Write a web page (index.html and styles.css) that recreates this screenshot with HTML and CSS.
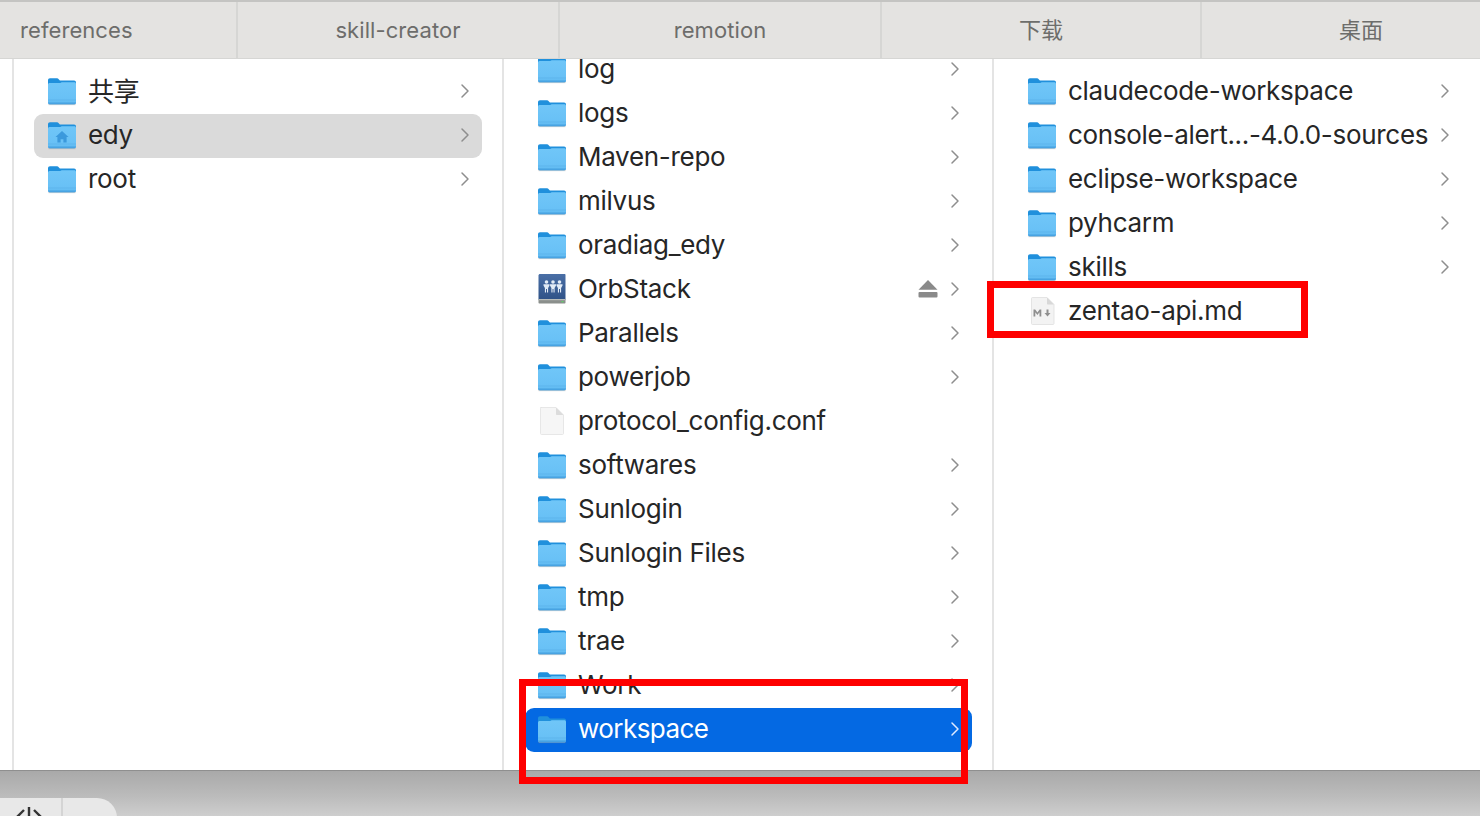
FILE: index.html
```html
<!DOCTYPE html>
<html lang="zh">
<head>
<meta charset="utf-8">
<title>Finder</title>
<link rel="stylesheet" href="styles.css">
</head>
<body>
<svg class="defs" width="0" height="0" aria-hidden="true">
  <defs>
    <linearGradient id="fb" x1="0" y1="0" x2="0" y2="1"><stop offset="0" stop-color="#70c6f8"/><stop offset="1" stop-color="#66bff5"/></linearGradient>
    <linearGradient id="ob" x1="0" y1="0" x2="0" y2="1"><stop offset="0" stop-color="#4a6fa6"/><stop offset="1" stop-color="#2f5287"/></linearGradient>
    <symbol id="folder" viewBox="0 0 30 30">
      <path d="M1.500 28.500h27" stroke="#9a9a9a" stroke-opacity=".5" stroke-width="1.200"/>
      <path d="M1 6.500V4.200C1 3 1.800 2.200 3 2.200h6.600c1 0 1.500.4 2.100 1l1.200 1.200h14.200c1.200 0 1.900.8 1.900 2v3H1z" fill="#2090dc"/>
      <path d="M1 8.700c0-1 .7-1.600 1.700-1.600h10.600l1.400-.9h12.600c1 0 1.700.7 1.700 1.700v18.500c0 1.100-.7 1.900-1.900 1.900H2.900C1.700 28.300 1 27.500 1 26.400z" fill="url(#fb)"/>
      <path d="M1 23.500h28v1.100H1zM1 25.800h28v.8H1z" fill="#4fa9e6" opacity=".5"/>
      <path d="M1 26.600h28c0 1-.7 1.700-1.900 1.700H2.900C1.700 28.300 1 27.600 1 26.600z" fill="#48a3e2"/>
    </symbol>
    <symbol id="chev" viewBox="0 0 10 16">
      <path d="M2 2l6 6-6 6" fill="none" stroke="currentColor" stroke-width="1.500" stroke-linecap="round" stroke-linejoin="round"/>
    </symbol>
  </defs>
</svg>

<div class="window">
  <header class="tabs">
    <div class="tab tab-first">references</div>
    <div class="tab tab-b">skill-creator</div>
    <div class="tab tab-c">remotion</div>
    <div class="tab tab-d tab-cjk">下载</div>
    <div class="tab tab-e tab-cjk">桌面</div>
  </header>

  <main class="browser">
    <div class="gutter"></div>

    <section class="col col-1">
      <ul class="list list-1">
        <li class="row"><svg class="ico"><use href="#folder"/></svg><span class="name name-cjk">共享</span><svg class="chev"><use href="#chev"/></svg></li>
        <li class="row row-muted">
          <svg class="ico" viewBox="0 0 30 30"><use href="#folder" width="30" height="30"/><path d="M15 11l-6.500 6h1.900v5.500h3.200v-3.300h2.800v3.300h3.200V17h1.900z" fill="#2f8fd6" opacity=".8"/></svg>
          <span class="name">edy</span><svg class="chev"><use href="#chev"/></svg></li>
        <li class="row"><svg class="ico"><use href="#folder"/></svg><span class="name">root</span><svg class="chev"><use href="#chev"/></svg></li>
      </ul>
    </section>

    <section class="col col-2">
      <ul class="list list-2">
        <li class="row"><svg class="ico"><use href="#folder"/></svg><span class="name">log</span><svg class="chev"><use href="#chev"/></svg></li>
        <li class="row"><svg class="ico"><use href="#folder"/></svg><span class="name">logs</span><svg class="chev"><use href="#chev"/></svg></li>
        <li class="row"><svg class="ico"><use href="#folder"/></svg><span class="name">Maven-repo</span><svg class="chev"><use href="#chev"/></svg></li>
        <li class="row"><svg class="ico"><use href="#folder"/></svg><span class="name">milvus</span><svg class="chev"><use href="#chev"/></svg></li>
        <li class="row"><svg class="ico"><use href="#folder"/></svg><span class="name">oradiag_edy</span><svg class="chev"><use href="#chev"/></svg></li>
        <li class="row">
          <svg class="ico" viewBox="0 0 30 30">
            <path d="M3 0h24.500c.6 0 1 .4 1 1v25H1.500V1.500C1.500 .7 2.200 0 3 0z" fill="url(#ob)"/>
            <path d="M1.500 25.500h27v3.300c0 .4-.3.700-.7.700H2.200c-.4 0-.7-.3-.7-.7z" fill="#8b8f8c"/>
            <path d="M1.500 25h27v1.200h-27z" fill="#b9bdba"/>
            <rect x="24.500" y="27" width="2" height="1.300" fill="#5fd06a"/>
            <g fill="#e3ecf6">
              <circle cx="9.500" cy="8" r="1.800"/><path d="M6.500 10.300h6v1.200l-1.400 2.500v4.500H10v-3.500H9v3.500H7.900V14l-1.400-2.500z"/>
              <circle cx="16" cy="8" r="1.800"/><path d="M13 10.300h6v1.200l-1.400 2.500v4.500h-1.100v-3.500h-1v3.500h-1.100V14L13 11.500z"/>
              <circle cx="22.500" cy="8" r="1.800"/><path d="M19.500 10.300h6v1.200l-1.400 2.500v4.500H23v-3.500h-1v3.500h-1.100V14l-1.400-2.500z"/>
            </g>
          </svg>
          <span class="name">OrbStack</span>
          <svg class="eject" viewBox="0 0 20 18"><path d="M10 0l9.500 9.800H.5z" fill="#8a8a8a"/><rect x=".5" y="12" width="19" height="5.500" rx="1" fill="#8a8a8a"/></svg>
          <svg class="chev"><use href="#chev"/></svg></li>
        <li class="row"><svg class="ico"><use href="#folder"/></svg><span class="name">Parallels</span><svg class="chev"><use href="#chev"/></svg></li>
        <li class="row"><svg class="ico"><use href="#folder"/></svg><span class="name">powerjob</span><svg class="chev"><use href="#chev"/></svg></li>
        <li class="row">
          <svg class="ico" viewBox="0 0 30 30"><path d="M3.500 1.500h15.500l7.500 7.500v18.500c0 .6-.4 1-1 1h-21c-.6 0-1-.4-1-1v-25c0-.6.400-1 1-1z" fill="#f6f6f6" stroke="#e2e2e2" stroke-width=".8"/><path d="M19 1.500V8c0 .6.400 1 1 1h6.500z" fill="#dcdcdc"/></svg>
          <span class="name">protocol_config.conf</span></li>
        <li class="row"><svg class="ico"><use href="#folder"/></svg><span class="name">softwares</span><svg class="chev"><use href="#chev"/></svg></li>
        <li class="row"><svg class="ico"><use href="#folder"/></svg><span class="name">Sunlogin</span><svg class="chev"><use href="#chev"/></svg></li>
        <li class="row"><svg class="ico"><use href="#folder"/></svg><span class="name">Sunlogin Files</span><svg class="chev"><use href="#chev"/></svg></li>
        <li class="row"><svg class="ico"><use href="#folder"/></svg><span class="name">tmp</span><svg class="chev"><use href="#chev"/></svg></li>
        <li class="row"><svg class="ico"><use href="#folder"/></svg><span class="name">trae</span><svg class="chev"><use href="#chev"/></svg></li>
        <li class="row"><svg class="ico"><use href="#folder"/></svg><span class="name">Work</span><svg class="chev"><use href="#chev"/></svg></li>
        <li class="row row-active"><svg class="ico"><use href="#folder"/></svg><span class="name">workspace</span><svg class="chev"><use href="#chev"/></svg></li>
      </ul>
    </section>

    <section class="col col-3">
      <ul class="list list-1">
        <li class="row"><svg class="ico"><use href="#folder"/></svg><span class="name">claudecode-workspace</span><svg class="chev"><use href="#chev"/></svg></li>
        <li class="row"><svg class="ico"><use href="#folder"/></svg><span class="name">console-alert...-4.0.0-sources</span><svg class="chev"><use href="#chev"/></svg></li>
        <li class="row"><svg class="ico"><use href="#folder"/></svg><span class="name">eclipse-workspace</span><svg class="chev"><use href="#chev"/></svg></li>
        <li class="row"><svg class="ico"><use href="#folder"/></svg><span class="name">pyhcarm</span><svg class="chev"><use href="#chev"/></svg></li>
        <li class="row"><svg class="ico"><use href="#folder"/></svg><span class="name">skills</span><svg class="chev"><use href="#chev"/></svg></li>
        <li class="row">
          <svg class="ico" viewBox="0 0 30 30"><path d="M5.500 1.500h14.500l7 7v19c0 .6-.4 1-1 1H5.500c-.6 0-1-.4-1-1v-25c0-.6.400-1 1-1z" fill="#f3f3f3" stroke="#dedede" stroke-width=".8"/><path d="M20 1.500V7.500c0 .6.400 1 1 1h6z" fill="#d8d8d8"/><path d="M6.500 20.500v-7h1.700l2.200 3 2.200-3h1.700v7h-1.800v-4.200l-2.100 2.800-2.100-2.800v4.200zM19.500 13.500h2v3.500h2l-3 3.500-3-3.500h2z" fill="#8f8f8f"/></svg>
          <span class="name">zentao-api.md</span></li>
      </ul>
    </section>
  </main>

  <footer class="dock">
    <div class="dock-tab">
      <div class="dock-cell">
        <svg class="code" viewBox="0 0 26 18"><path d="M8 3L2 9l6 6M18 3l6 6-6 6" fill="none" stroke="#333" stroke-width="2.400"/><path d="M13 0v18" stroke="#333" stroke-width="2.400"/></svg>
      </div>
      <div class="dock-cell dock-cell-b"></div>
    </div>
  </footer>
</div>

<div class="mark mark-work"></div>
<div class="mark mark-file"></div>
</body>
</html>
```
FILE: styles.css
```css
* { box-sizing: border-box; }
html, body { margin: 0; padding: 0; height: 100%; }
body {
  width: 1480px;
  height: 816px;
  overflow: hidden;
  background: #fff;
  font-family: Inter, "Noto Sans CJK SC", "Liberation Sans", sans-serif;
  color: #262626;
  position: relative;
}
.defs { position: absolute; }
.window { display: flex; flex-direction: column; height: 816px; }

.tabs {
  display: flex;
  flex: 0 0 59px;
  background: #e4e3e1;
  border-top: 2px solid #c4c4c2;
  border-bottom: 1px solid #d6d6d4;
  font-size: 22px;
  letter-spacing: .08px;
  color: #6d6d6b;
  overflow: hidden;
}
.tab {
  display: flex;
  align-items: center;
  justify-content: center;
  border-left: 2px solid #d6d6d4;
  padding-bottom: 1px;
}
.tab-first { flex: 0 0 236px; justify-content: flex-start; padding-left: 20px; border-left: 0; }
.tab-b { flex: 0 0 322px; }
.tab-c { flex: 0 0 322px; }
.tab-d { flex: 0 0 320px; }
.tab-e { flex: 0 0 320px; }
.tab-cjk { padding-bottom: 4px; }

.browser { display: flex; flex: 0 0 711px; background: #fff; }
.gutter { flex: 0 0 12px; }
.col {
  flex: 0 0 490px;
  border-left: 2px solid #e4e4e4;
  overflow: hidden;
}
.col-3 { flex: 1; }
.list { list-style: none; margin: 0; padding: 0; }
.list-1 { padding-top: 11px; }
.list-2 { margin-top: -11px; }

.row {
  display: flex;
  align-items: center;
  height: 44px;
  margin: 0 20px 0 20px;
  padding: 0 12px 0 13px;
  border-radius: 9px;
  font-size: 26px;
  letter-spacing: -.3px;
}
.col-2 .row, .col-3 .row { margin-left: 21px; padding-left: 12px; }
.col-3 .row { margin-right: 18px; }
.ico { flex: 0 0 30px; width: 30px; height: 30px; margin: 0 11px 2px 0; }
.name { flex: 1; white-space: nowrap; padding-bottom: 3px; }
.name-cjk { padding-bottom: 6px; }
.chev { flex: 0 0 10px; width: 10px; height: 16px; color: #8e8e8e; margin-bottom: 2px; }
.eject { flex: 0 0 20px; width: 20px; height: 18px; margin: 0 12px 2px 0; }
.row-muted { background: #dadada; }
.row-active { background: #0469e3; color: #fff; letter-spacing: -.55px; }
.row-active .chev { color: #dfeaff; }

.dock {
  flex: 0 0 46px;
  border-top: 1px solid #8f8f8f;
  background: linear-gradient(180deg, #a9a9a9 0%, #bcbcbc 55%, #d0d0d0 100%);
  padding-top: 27px;
}
.dock-tab {
  display: flex;
  width: 117px;
  height: 20px;
  background: #e8e8e8;
  border-radius: 0 22px 0 0;
}
.dock-cell { flex: 0 0 63px; border-right: 2px solid #d4d4d4; display: flex; justify-content: center; padding: 9px 4px 0 0; overflow: hidden; }
.dock-cell-b { flex: 1; border-right: 0; }
.code { width: 26px; height: 18px; flex: none; }

.mark { position: absolute; border: 7px solid #fe0000; }
.mark-work { left: 519px; top: 679px; width: 449px; height: 105px; }
.mark-file { left: 987px; top: 281px; width: 321px; height: 57px; }
```
